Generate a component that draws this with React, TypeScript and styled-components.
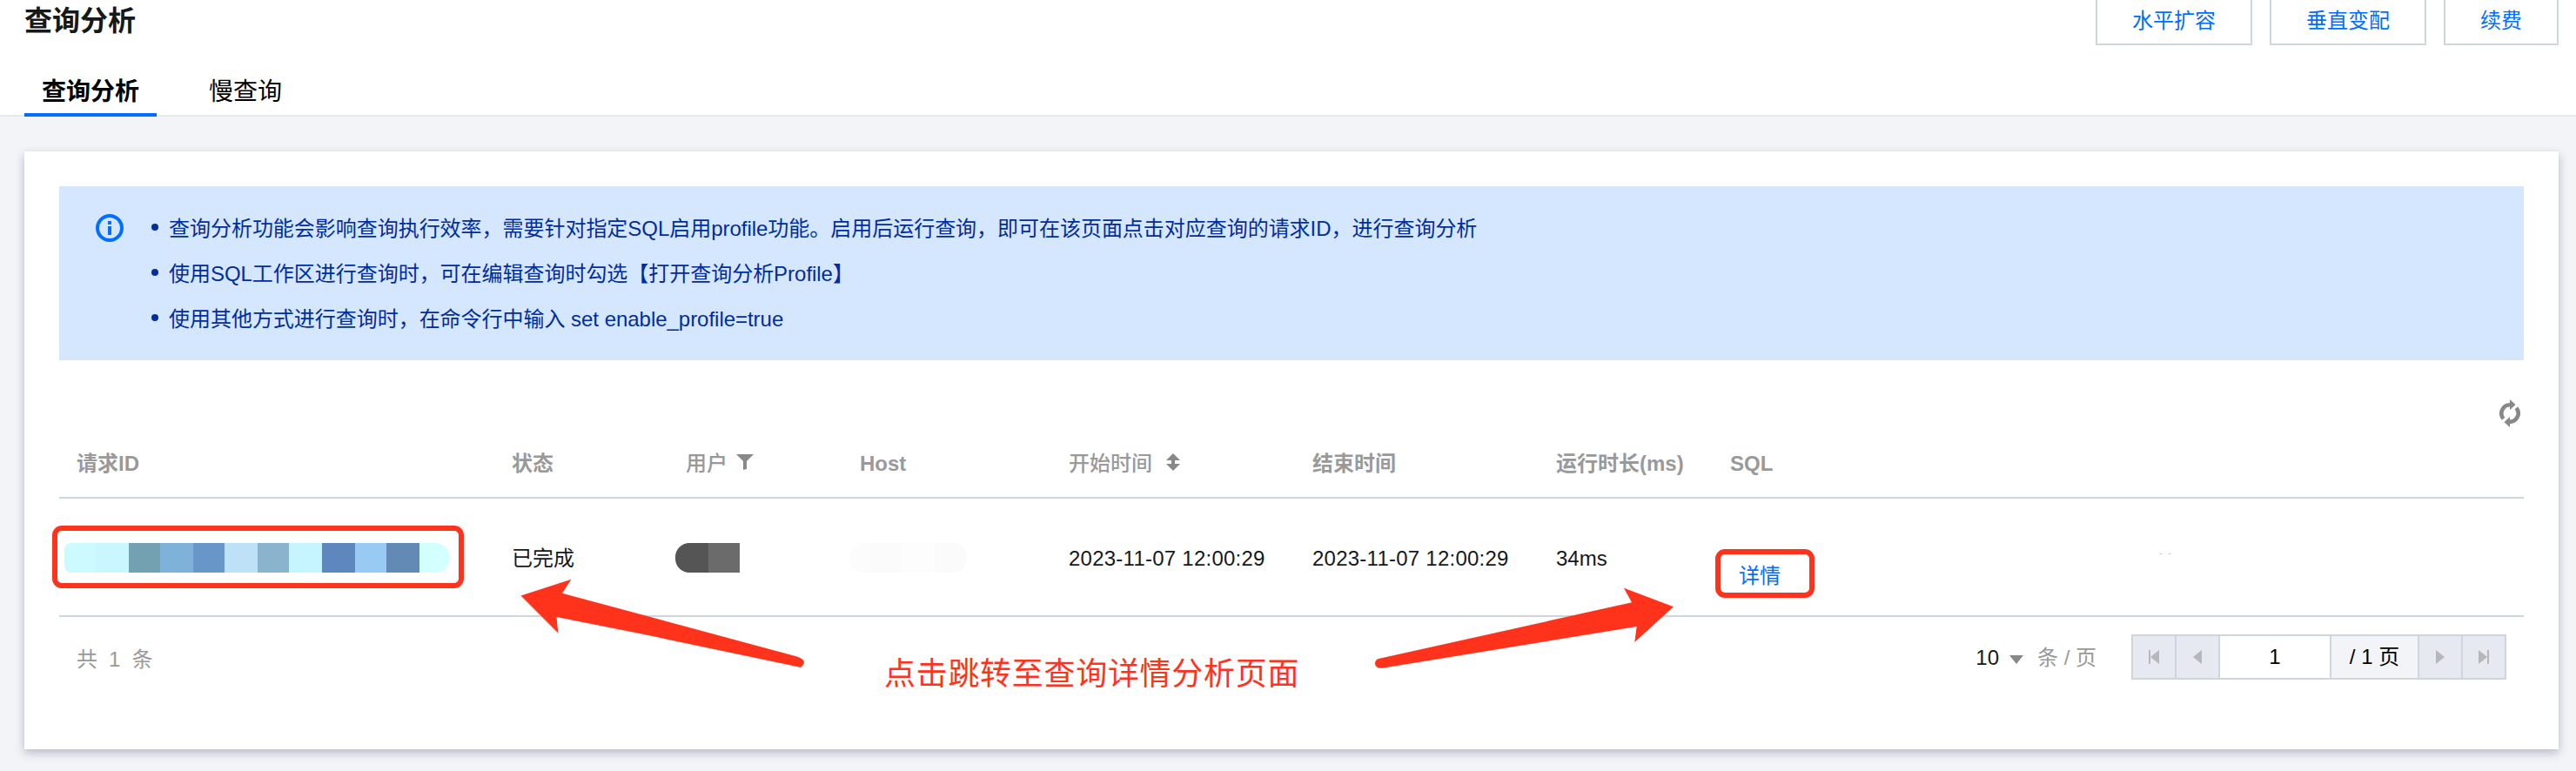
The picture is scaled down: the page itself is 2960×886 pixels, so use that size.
import React from 'react'
import styled, { createGlobalStyle } from 'styled-components'

const GlobalStyle = createGlobalStyle`
    * {
        box-sizing: border-box;
    }

    body {
        margin: 0;
        background: #f2f4f8;
        color: #000;
        font-family: 'Liberation Sans', 'Noto Sans CJK SC', sans-serif;
        font-size: 24px;
        line-height: 36px;
    }
`

const Page = styled.div`
    position: relative;
    width: 2960px;
    height: 886px;
    overflow: hidden;
`

const Header = styled.header`
    display: flex;
    flex-direction: column;
    justify-content: space-between;
    height: 134px;
    padding: 0 20px 0 28px;
    background: #fff;
    border-bottom: 2px solid #e5e8ed;
`

const TitleBar = styled.div`
    display: flex;
    justify-content: space-between;
    height: 52px;
`

const Title = styled.h1`
    margin: 0;
    padding-top: 4px;
    color: #16181a;
    font-size: 32px;
    font-weight: 700;
    line-height: 40px;
`

const Actions = styled.div`
    display: flex;
    gap: 20px;
    margin-top: -8px;
`

const Button = styled.button`
    height: 60px;
    padding: 3px 40px 0;
    background: #fff;
    border: 2px solid #cfd5de;
    color: #006eff;
    font: inherit;
`

const Tabs = styled.nav`
    display: flex;
    gap: 40px;
    margin-bottom: -2px;
`

const Tab = styled.div<{ active?: boolean }>`
    height: 60px;
    padding: 14px 20px 0;
    font-size: 28px;
    font-weight: ${(props) => (props.active ? 700 : 400)};
    border-bottom: 4px solid ${(props) => (props.active ? '#006eff' : 'transparent')};
`

const Card = styled.main`
    height: 687px;
    margin: 40px 20px 0 28px;
    padding: 40px;
    background: #fff;
    box-shadow: 0 4px 10px rgba(54, 58, 80, 0.32);
`

const Alert = styled.div`
    display: flex;
    height: 200px;
    padding: 22px 42px;
    background: #d5e6ff;
    color: #002da0;
`

const InfoIcon = styled.svg`
    width: 32px;
    height: 32px;
    margin: 10px 32px 0 0;
`

const Tips = styled.ul`
    margin: 0;
    padding: 1px 0 0;
    list-style: none;
    line-height: 52px;
    letter-spacing: -0.03px;
`

const Tip = styled.li`
    display: flex;
    align-items: center;
    height: 52px;
    white-space: pre;

    &::before {
        content: '';
        width: 8px;
        height: 8px;
        margin: -5px 12px 0 0;
        border-radius: 50%;
        background: currentColor;
    }
`

const Toolbar = styled.div`
    display: flex;
    justify-content: flex-end;
    align-items: flex-end;
    height: 78px;
    padding: 0 4px 1px 0;
`

const Row = styled.div<{ head?: boolean }>`
    display: grid;
    grid-template-columns: 500px 200px 200px 240px 280px 280px 200px 1fr;
    align-items: center;
    height: ${(props) => (props.head ? 81 : 136)}px;
    padding-top: ${(props) => (props.head ? 0 : 2)}px;
    border-bottom: 2px solid #cfd5de;
    color: ${(props) => (props.head ? '#999' : '#16181a')};
    font-weight: ${(props) => (props.head ? 700 : 400)};
`

const Cell = styled.div<{ medium?: boolean }>`
    display: flex;
    align-items: center;
    padding: 2px 0 0 20px;
    white-space: nowrap;
    font-weight: ${(props) => (props.medium ? 500 : 'inherit')};
`

const Time = styled.span`
    letter-spacing: 0.24px;
`

const HeadIcon = styled.svg<{ gap: number }>`
    margin: -3px 0 0 ${(props) => props.gap}px;
    fill: #888;
`

const Mosaic = styled.div<{ shift: number; radius: string }>`
    display: flex;
    justify-self: start;
    height: 34px;
    margin-left: ${(props) => props.shift}px;
    border-radius: ${(props) => props.radius};
    overflow: hidden;
`

const Block = styled.span<{ w: number; color: string }>`
    width: ${(props) => props.w}px;
    background: ${(props) => props.color};
`

const DetailCell = styled(Cell)`
    padding: 42px 0 0 30px;
    color: #006eff;
`

const Trace = styled.span`
    display: flex;
    gap: 8px;
    margin: -52px 0 0 436px;

    i {
        width: 2px;
        height: 1px;
        background: #bbb;
    }
`

const Footer = styled.footer`
    display: flex;
    align-items: center;
    height: 92px;
    padding: 0 20px;
`

const Total = styled.div`
    flex: 1;
    padding-top: 5px;
    color: #999;
    word-spacing: 6.4px;
`

const PageSize = styled.div`
    display: flex;
    align-items: center;
    padding-top: 2px;
    color: #16181a;

    svg {
        margin: 4px 16px 0 12px;
    }
`

const Unit = styled.span`
    margin-right: 40px;
    color: #999;
`

const Pager = styled.div`
    display: flex;
    height: 52px;
    border: 2px solid #cfd5de;
    color: #000;
`

const PagerItem = styled.div<{ w: number; bg?: string }>`
    display: flex;
    justify-content: center;
    align-items: center;
    width: ${(props) => props.w}px;
    background: ${(props) => props.bg || '#e6e9ef'};

    & + & {
        border-left: 2px solid #cfd5de;
    }
`

const Highlight = styled.div<{ x: number; y: number; w: number; h: number }>`
    position: absolute;
    left: ${(props) => props.x}px;
    top: ${(props) => props.y}px;
    width: ${(props) => props.w}px;
    height: ${(props) => props.h}px;
    border: 6px solid #ff331c;
    border-radius: 11px;
`

const Arrows = styled.svg`
    position: absolute;
    left: 0;
    top: 0;
    fill: #ff331c;
    pointer-events: none;
`

const Note = styled.div`
    position: absolute;
    left: 1016px;
    top: 748px;
    color: #ff331c;
    font-size: 36px;
    line-height: 54px;
    letter-spacing: 0.7px;
    white-space: nowrap;
`

const idBlocks: [number, string][] = [
    [36, '#cdfaff'],
    [38, '#c9f6ff'],
    [36, '#74a1b2'],
    [38, '#7eb2d8'],
    [36, '#6896c8'],
    [38, '#bfe1f8'],
    [36, '#8ab3ce'],
    [38, '#c6f4ff'],
    [38, '#5e87bd'],
    [36, '#98caf4'],
    [38, '#628ab5'],
    [35, '#d2ffff'],
]

const userBlocks: [number, string][] = [
    [38, '#555'],
    [36, '#6b6b6b'],
]

const hostBlocks: [number, string][] = [
    [24, '#fcfcfc'],
    [36, '#fbfbfb'],
    [38, '#fdfdfd'],
    [37, '#fbfbfb'],
]

const Redacted: React.FC<{ blocks: [number, string][]; shift: number; radius: string }> = ({ blocks, shift, radius }) => (
    <Mosaic shift={shift} radius={radius}>
        {blocks.map(([w, color], i) => (
            <Block key={i} w={w} color={color} />
        ))}
    </Mosaic>
)

const PagerArrow: React.FC<{ flip?: boolean; bar?: boolean }> = ({ flip, bar }) => (
    <svg width="12" height="16" viewBox="0 0 12 16" fill="#b5b7ba">
        <g transform={flip ? 'translate(12 0) scale(-1 1)' : undefined}>
            {bar && <path d="M0 0h2v16H0z" />}
            <path d={bar ? 'M12 0v16L2 8z' : 'M11 0v16L1 8z'} />
        </g>
    </svg>
)

const App: React.FC = () => {
    return (
        <Page>
            <GlobalStyle />
            <Header>
                <TitleBar>
                    <Title>查询分析</Title>
                    <Actions>
                        <Button>水平扩容</Button>
                        <Button>垂直变配</Button>
                        <Button>续费</Button>
                    </Actions>
                </TitleBar>
                <Tabs>
                    <Tab active>查询分析</Tab>
                    <Tab>慢查询</Tab>
                </Tabs>
            </Header>
            <Card>
                <Alert>
                    <InfoIcon viewBox="0 0 32 32">
                        <circle cx="16" cy="16" r="14" fill="none" stroke="#006eff" strokeWidth="4" />
                        <path d="M14 8h4v4h-4zM14 14h4v10h-4z" fill="#006eff" />
                    </InfoIcon>
                    <Tips>
                        <Tip>查询分析功能会影响查询执行效率，需要针对指定SQL启用profile功能。启用后运行查询，即可在该页面点击对应查询的请求ID，进行查询分析</Tip>
                        <Tip>使用SQL工作区进行查询时，可在编辑查询时勾选【打开查询分析Profile】</Tip>
                        <Tip>使用其他方式进行查询时，在命令行中输入 set enable_profile=true</Tip>
                    </Tips>
                </Alert>
                <Toolbar>
                    <svg width="24" height="32" viewBox="0 0 24 32" fill="none" stroke="#888" strokeWidth="4.6">
                        <path d="M4.600 22.200A9.700 9.700 0 0 1 12 6.300M19.400 9.800A9.700 9.700 0 0 1 12 25.700" />
                        <path d="M12 0l6.500 6-6.500 6zM12 20v12l-6.500-6z" fill="#888" stroke="none" />
                    </svg>
                </Toolbar>
                <Row head>
                    <Cell>请求ID</Cell>
                    <Cell>状态</Cell>
                    <Cell medium>
                        用户
                        <HeadIcon gap={10} width="20" height="18" viewBox="0 0 20 18">
                            <path d="M0 0h20l-8 8v9l-4 1V8z" />
                        </HeadIcon>
                    </Cell>
                    <Cell>Host</Cell>
                    <Cell medium>
                        开始时间
                        <HeadIcon gap={16} width="16" height="20" viewBox="0 0 16 20">
                            <path d="M8 0l8 8h-6v4h6l-8 8-8-8h6V8H0z" />
                        </HeadIcon>
                    </Cell>
                    <Cell>结束时间</Cell>
                    <Cell>运行时长(ms)</Cell>
                    <Cell>SQL</Cell>
                </Row>
                <Row>
                    <Redacted blocks={idBlocks} shift={6} radius="8px 17px 17px 8px" />
                    <Cell>已完成</Cell>
                    <Redacted blocks={userBlocks} shift={8} radius="16px 0 0 16px" />
                    <Redacted blocks={hostBlocks} shift={8} radius="16px" />
                    <Cell>
                        <Time>2023-11-07 12:00:29</Time>
                    </Cell>
                    <Cell>
                        <Time>2023-11-07 12:00:29</Time>
                    </Cell>
                    <Cell>34ms</Cell>
                    <DetailCell>
                        详情
                        <Trace>
                            <i />
                            <i />
                        </Trace>
                    </DetailCell>
                </Row>
                <Footer>
                    <Total>共 1 条</Total>
                    <PageSize>
                        10
                        <svg width="16" height="10" viewBox="0 0 16 10">
                            <path d="M0 0h16l-8 10z" fill="#888" />
                        </svg>
                        <Unit>条 / 页</Unit>
                    </PageSize>
                    <Pager>
                        <PagerItem w={48}>
                            <PagerArrow bar />
                        </PagerItem>
                        <PagerItem w={50}>
                            <PagerArrow />
                        </PagerItem>
                        <PagerItem w={128} bg="#fff">
                            1
                        </PagerItem>
                        <PagerItem w={101} bg="#f2f4f8">
                            / 1 页
                        </PagerItem>
                        <PagerItem w={50}>
                            <PagerArrow flip />
                        </PagerItem>
                        <PagerItem w={50}>
                            <PagerArrow flip bar />
                        </PagerItem>
                    </Pager>
                </Footer>
            </Card>
            <Highlight x={60} y={604} w={473} h={72} />
            <Highlight x={1971} y={631} w={114} h={56} />
            <Arrows width="2960" height="886">
                <path d="M598.500 684.500L656.500 665.700L646 681.700L740 707L914 754Q924 757 924 761Q922 768 918 766.500L740 729L639.500 709L641.400 727.500Z" />
                <path d="M1923 697.300L1866 675.700L1875 692.300L1584 757Q1580 758 1580 763Q1581 769 1590 767.500L1880.700 720L1878.300 738Z" />
            </Arrows>
            <Note>点击跳转至查询详情分析页面</Note>
        </Page>
    )
}

export default App
